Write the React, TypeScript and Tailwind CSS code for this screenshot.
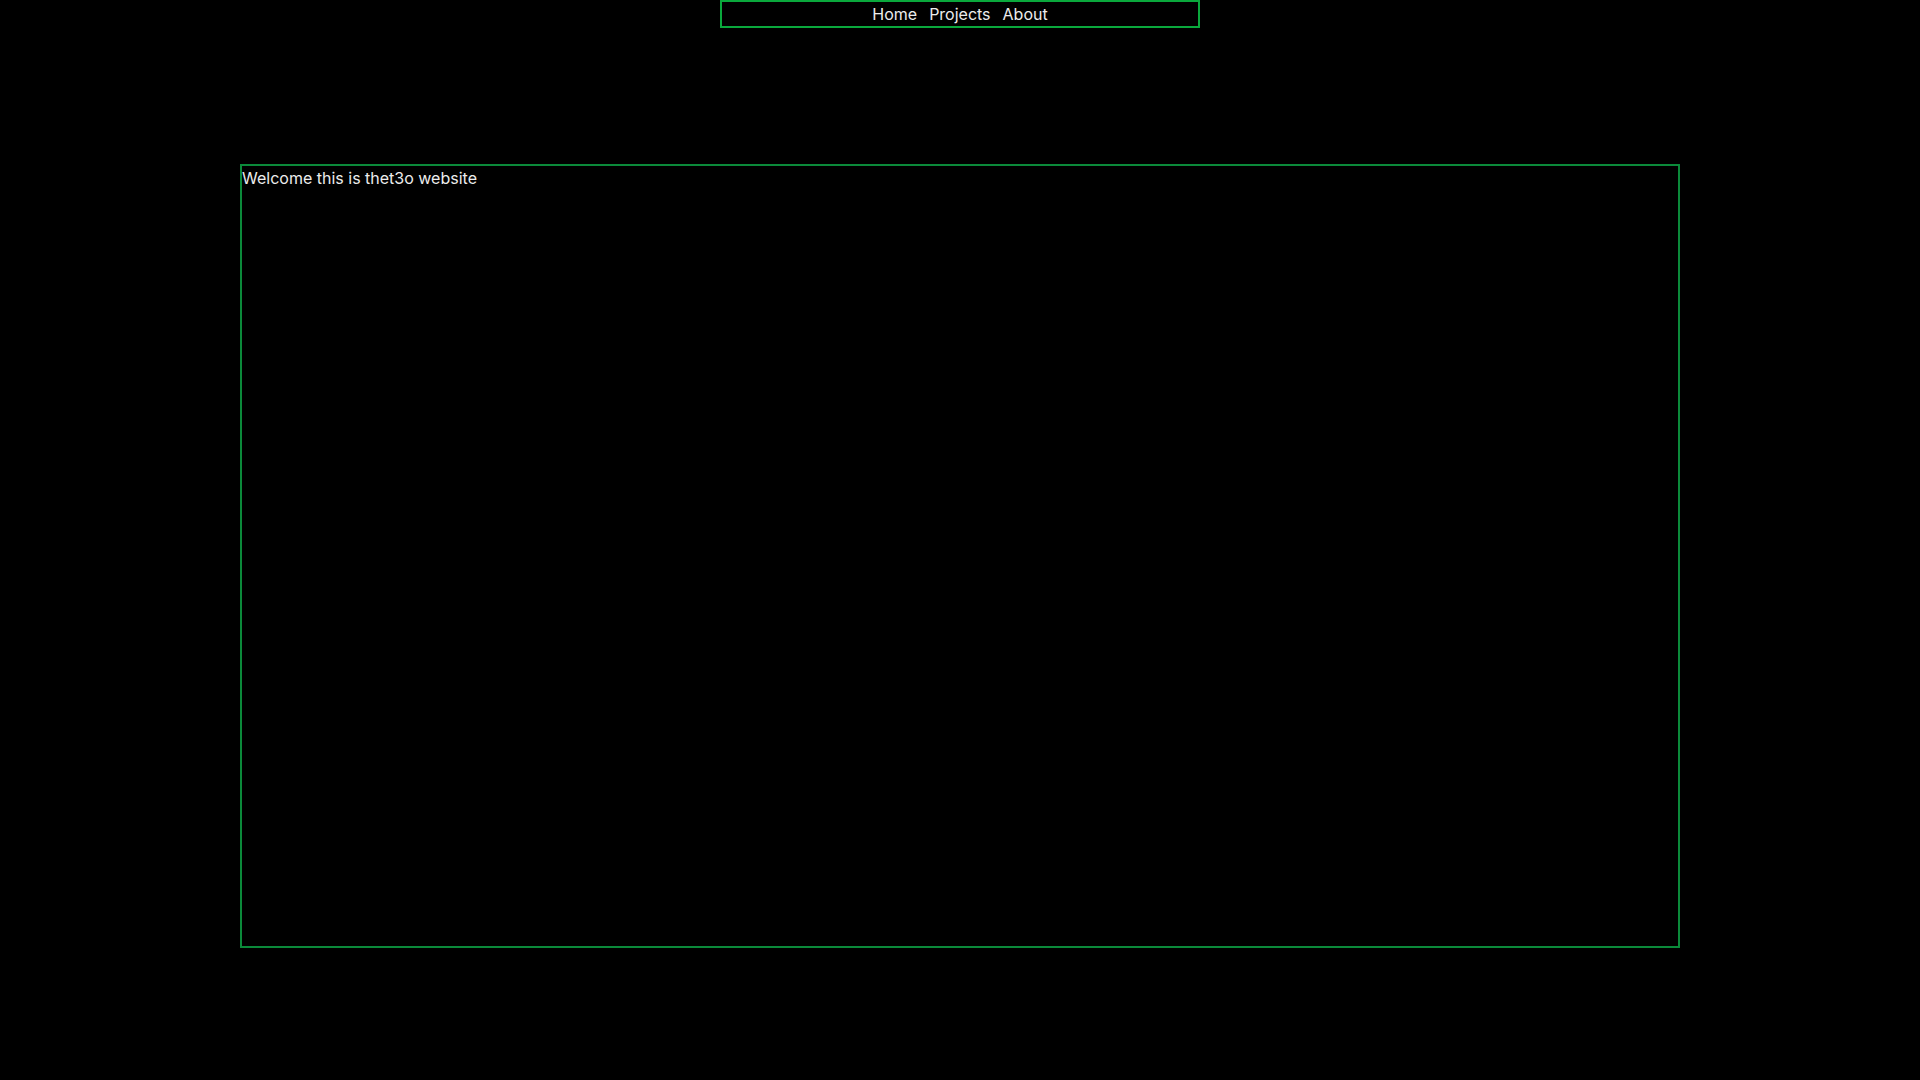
import React from 'react';

const links = ['Home', 'Projects', 'About'];

export default function App() {
    return (
        <div className="min-h-screen w-full bg-black text-[#ececec]" style={{ fontFamily: 'Inter, "Noto Sans", sans-serif' }}>
            {/* Top nav */}
            <nav className="mx-auto flex h-[28px] w-[480px] items-center justify-center gap-3 border-2 border-[#0aa83c] text-base leading-none">
                {links.map(l => (
                    <a key={l} href="#" className="hover:text-white">{l}</a>
                ))}
            </nav>

            {/* Main panel */}
            <main className="mx-auto mt-[136px] h-[784px] w-[1440px] border-2 border-[#0b8a3a]">
                <p className="text-base leading-6">Welcome this is thet3o website</p>
            </main>
        </div>
    );
}
